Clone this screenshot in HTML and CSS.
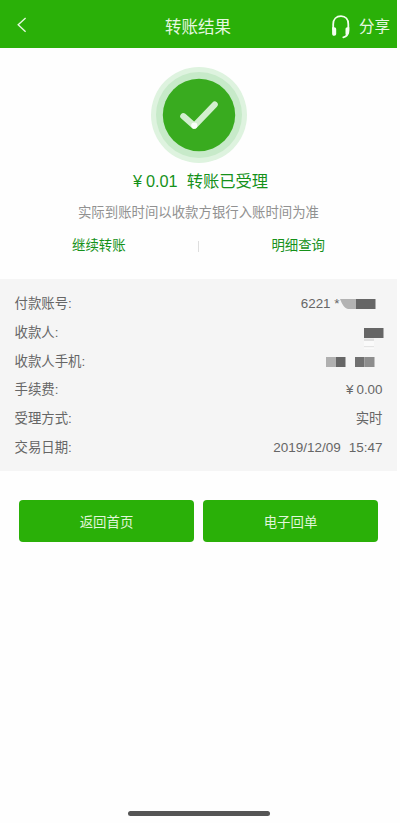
FILE: index.html
```html
<!DOCTYPE html>
<html lang="zh-CN">
<head>
<meta charset="utf-8">
<meta name="viewport" content="width=device-width, initial-scale=1">
<title>转账结果</title>
<link rel="stylesheet" href="styles.css">
</head>
<body>
<div class="screen">
  <header class="bar">
    <svg class="back" width="10" height="16" viewBox="0 0 10 16"><path d="M8.6 1 1.2 7.8 8.6 14.8"/></svg>
    <h1 class="title">转账结果</h1>
    <div class="actions">
      <svg class="headset" width="20" height="24" viewBox="0 0 20 24">
        <path class="line" d="M2.2 14V9.2C2.2 4.4 5.4 1.200 10 1.200s7.300 3.200 7.300 8V15c0 4.300-1.800 6.700-5 7.300"/>
        <path class="fill" d="M1.400 12.200h1.800c1.300 0 2 .7 2 2v4.600c0 1.200-.7 1.900-1.900 1.900-1.500 0-2.200-.9-2.200-2.300v-6zM18.300 12.200h-1.800c-1.300 0-2 .7-2 2v4.600c0 1.100.6 1.700 1.700 1.700 1.600-.9 2.100-2.600 2.100-4.500z"/>
      </svg>
      <span class="share">分享</span>
    </div>
  </header>
  <main>
    <section class="result">
      <svg class="badge" width="96" height="96" viewBox="0 0 96 96">
        <circle cx="48" cy="48" r="48" fill="#def3df"/>
        <circle cx="48" cy="48" r="43" fill="#c7eac9"/>
        <circle cx="48" cy="48" r="36.200" fill="#39ab1f"/>
        <path class="tick" d="M32.300 49.200 43.300 58.800 63.700 37.600"/>
        <circle cx="43.300" cy="58.500" r="3.100" fill="#fafffa"/>
      </svg>
      <p class="status"><span class="yen">¥</span><span class="sum">0.01</span><span>转账已受理</span></p>
      <p class="note">实际到账时间以收款方银行入账时间为准</p>
      <nav class="links"><a>继续转账</a><i class="divider"></i><a>明细查询</a></nav>
    </section>
    <dl class="details">
      <div class="row"><dt>付款账号:</dt><dd class="account">6221 *<svg class="mask" width="36" height="10" viewBox="0 0 36 10"><path fill="#b3b3b3" d="M0 0h16v10H8C4 9 2 5 0 0z"/><path fill="#666" d="M16 0h19.500v10H16z"/></svg></dd></div>
      <div class="row"><dt>收款人:</dt><dd class="payee"><svg width="20" height="21" viewBox="0 0 20 21"><path fill="#666" d="M0 0h19.500v10H0z"/><path fill="#e0e0e0" d="M0 10.500h10v2.500H0z"/><path fill="#fafafa" d="M0 13h10v8H0z"/><path fill="#e4e4e4" d="M0 18h10v1.200H0z"/></svg></dd></div>
      <div class="row"><dt>收款人手机:</dt><dd class="phone"><svg width="49" height="10" viewBox="0 0 49 10"><path fill="#b0b0b0" d="M0 0h10v10H0z"/><path fill="#666" d="M10 0h9.500v10H10z"/><path fill="#707070" d="M29 0h9.500v10H29z"/><path fill="#8d8d8d" d="M38.500 0h10v10h-10z"/></svg></dd></div>
      <div class="row"><dt>手续费:</dt><dd><span class="fee-yen">¥</span>0.00</dd></div>
      <div class="row"><dt>受理方式:</dt><dd>实时</dd></div>
      <div class="row"><dt>交易日期:</dt><dd class="date"><span>2019/12/09</span><span>15:47</span></dd></div>
    </dl>
    <div class="buttons"><button>返回首页</button><button>电子回单</button></div>
  </main>
  <div class="home"></div>
</div>
</body>
</html>
```
FILE: styles.css
```css
* { box-sizing: border-box; }
body {
  margin: 0;
  background: #fefefe;
  font-family: "Liberation Sans", "Noto Sans CJK SC", sans-serif;
  font-size: 13.4px;
  color: #666;
}
h1, p, dl, dd { margin: 0; }
svg { display: block; fill: none; }
.screen {
  width: 397px;
  height: 823px;
  display: flex;
  flex-direction: column;
}
.bar {
  height: 48px;
  padding: 6px 7px 0 17px;
  display: grid;
  grid-template-columns: 1fr auto 1fr;
  align-items: center;
  background: #2ab008;
  color: #e6f8e0;
}
.back { stroke: #e6f8e0; stroke-width: 1.4; margin-top: -4px; }
.title { font-size: 16.5px; font-weight: 400; line-height: 24px; margin-right: 11px; }
.actions { display: flex; justify-content: flex-end; align-items: center; gap: 8px; }
.share { font-size: 15.5px; line-height: 24px; }
.headset { margin-top: -1px; }
.headset .line { stroke: #f4fff0; stroke-width: 1.8; stroke-linecap: round; }
.headset .fill { fill: #f4fff0; }
.result {
  height: 231px;
  padding: 19px 0 0;
  display: flex;
  flex-direction: column;
  align-items: center;
}
.tick { stroke: #d2efce; stroke-width: 6.200; stroke-linecap: round; stroke-linejoin: round; }
.status {
  display: flex;
  height: 24px;
  margin: 6px 0 0 4px;
  font-size: 16.3px;
  line-height: 24px;
  color: #15911a;
}
.yen { width: 13px; }
.sum { margin-right: 9px; }
.note { margin-top: 10px; line-height: 20px; color: #919191; }
.links {
  width: 253px;
  margin: 13px 0 0;
  display: flex;
  justify-content: space-between;
  align-items: center;
  line-height: 20px;
  color: #15911a;
}
.divider { width: 1px; height: 11px; background: #dedede; }
.details {
  height: 192px;
  padding: 10.500px 14.500px 0;
  background: #f5f5f5;
}
.row {
  height: 28.850px;
  display: flex;
  justify-content: space-between;
  align-items: center;
  line-height: 20px;
}
.account { display: flex; align-items: center; margin-right: 7px; }
.mask { margin-top: 1px; }
.payee { margin: 12px -1.500px 0 0; }
.phone { margin: 0 7.500px 0 0; }
.fee-yen { margin-right: 3px; }
.date { display: flex; gap: 8px; font-size: 13.500px; }
.buttons {
  padding: 29px 19px 0;
  display: grid;
  grid-template-columns: 1fr 1fr;
  gap: 9px;
}
button {
  height: 42px;
  padding: 0;
  border: 0;
  border-radius: 4px;
  background: #2ab008;
  color: #e0f6da;
  font: inherit;
}
.home {
  width: 142px;
  height: 5px;
  margin: auto auto 7px 128px;
  border-radius: 3px;
  background: #555;
}
```
